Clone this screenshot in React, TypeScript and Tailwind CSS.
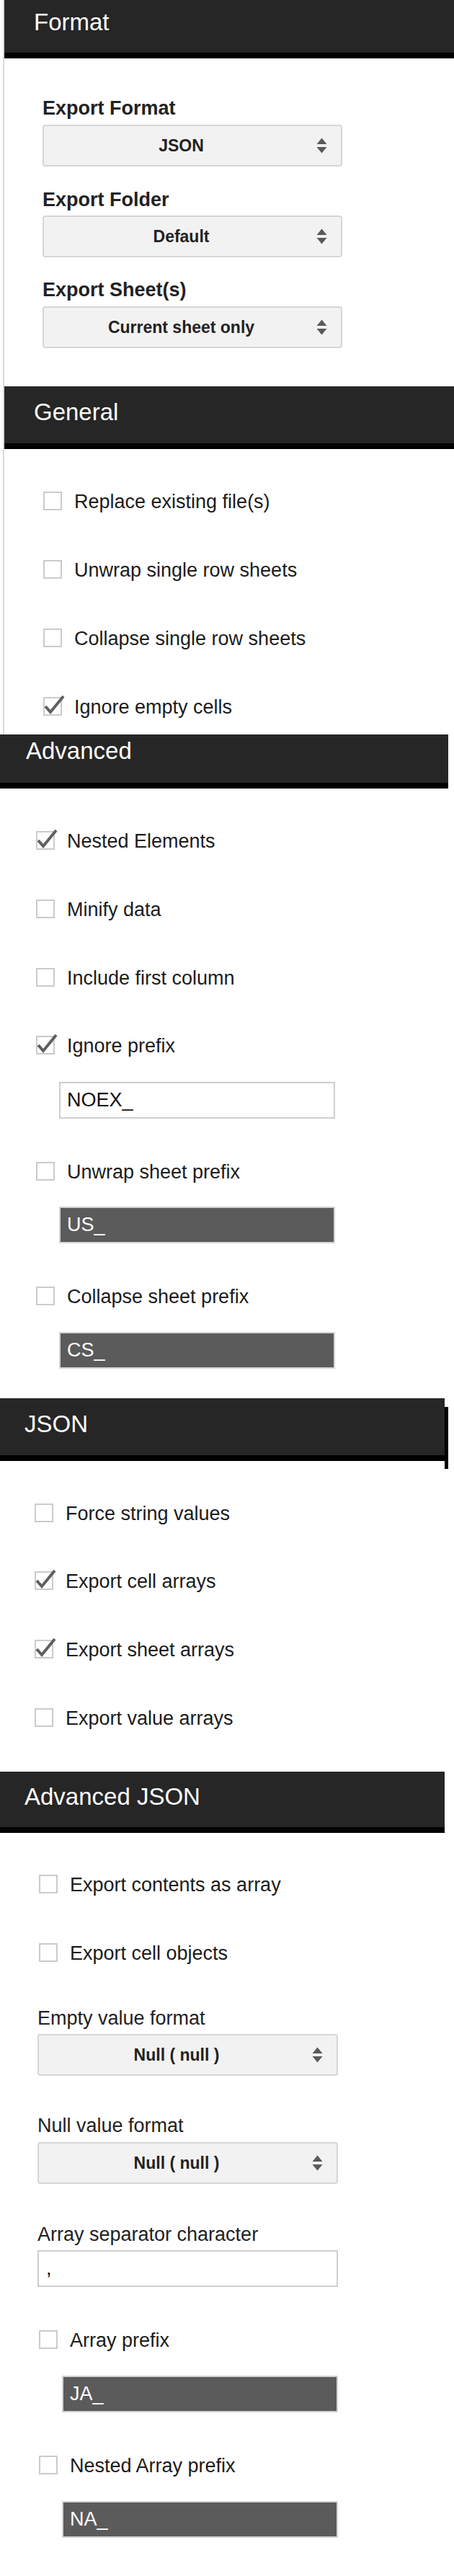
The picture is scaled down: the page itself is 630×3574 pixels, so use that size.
import React from 'react';

type CheckProps = { label: string; checked?: boolean; className?: string };

function Check({ label, checked, className = '' }: CheckProps) {
  return (
    <div className={`flex h-[26px] items-start gap-[17px] ${className}`}>
      <span className="relative h-[26px] w-[26px] shrink-0 border-2 border-[#cbcbcb] bg-white">
        {checked && (
          <svg className="absolute -left-[2px] -top-[6px] overflow-visible" width="32" height="30" viewBox="0 0 32 30">
            <path d="M3 17 L10 25 L28 3" fill="none" stroke="#5f5f5f" strokeWidth="4" />
          </svg>
        )}
      </span>
      <span className="mt-[1px] whitespace-nowrap text-[27px] leading-none text-[#1c1c1c]">{label}</span>
    </div>
  );
}

function Arrows() {
  return (
    <svg width="15" height="22" viewBox="0 0 15 22" className="shrink-0">
      <path d="M0.5 9 L7.5 0.5 L14.5 9 Z" fill="#5a5a5a" />
      <path d="M0.5 13 L14.5 13 L7.5 21.5 Z" fill="#5a5a5a" />
    </svg>
  );
}

function Select({ value, className = '' }: { value: string; className?: string }) {
  return (
    <div className={`flex h-[58px] items-center rounded-[4px] border-2 border-[#d6d6d6] bg-[#f2f2f2] pl-[3px] pr-[19px] ${className}`}>
      <span className="flex-1 text-center text-[23px] font-bold leading-none text-[#222]">{value}</span>
      <Arrows />
    </div>
  );
}

function Input({ value, dark, className = '' }: { value: string; dark?: boolean; className?: string }) {
  return (
    <div
      className={`flex h-[51px] items-center border-2 pl-[9px] text-[27px] leading-none ${
        dark ? 'border-[#d3d3d3] bg-[#5b5b5b] text-white' : 'border-[#cfcfcf] bg-white text-[#111]'
      } ${className}`}
    >
      {value}
    </div>
  );
}

function Header({ title, className, children }: { title: string; className: string; children?: React.ReactNode }) {
  return (
    <div className={`relative border-b-8 border-black bg-[#262626] text-[33px] leading-none text-white ${className}`}>
      {title}
      {children}
    </div>
  );
}

export default function App() {
  return (
    <div className="w-[630px] bg-white font-['Liberation_Sans',Arial,sans-serif] text-[#222]">
      {/* Format + General */}
      <div className="ml-[4px] h-[1019px] overflow-hidden border-l-2 border-[#d9d9d9]">
        <Header title="Format" className="h-[81px] pl-[41px] pt-[14px]" />
        <div className="pl-[53px] pt-[56px]">
          <div className="text-[27px] font-bold leading-none">Export Format</div>
          <Select value="JSON" className="mt-[9px] w-[416px]" />
          <div className="mt-[33px] text-[27px] font-bold leading-none">Export Folder</div>
          <Select value="Default" className="mt-[8px] w-[416px]" />
          <div className="mt-[32px] text-[27px] font-bold leading-none">Export Sheet(s)</div>
          <Select value="Current sheet only" className="mt-[9px] w-[416px]" />
        </div>
        <div className="mt-[53px]">
          <Header title="General" className="h-[87px] pl-[41px] pt-[19px]" />
        </div>
        <div className="flex flex-col gap-[69px] pl-[54px] pt-[59px]">
          <Check label="Replace existing file(s)" />
          <Check label="Unwrap single row sheets" />
          <Check label="Collapse single row sheets" />
          <Check label="Ignore empty cells" checked />
        </div>
      </div>

      {/* Advanced */}
      <div className="h-[921px] w-[622px]">
        <Header title="Advanced" className="h-[75px] pl-[36px] pt-[6px]" />
        <div className="pl-[50px] pt-[59px]">
          <Check label="Nested Elements" checked />
          <Check label="Minify data" className="mt-[69px]" />
          <Check label="Include first column" className="mt-[69px]" />
          <Check label="Ignore prefix" checked className="mt-[68px]" />
          <Input value="NOEX_" className="ml-[32px] mt-[38px] w-[383px]" />
          <Check label="Unwrap sheet prefix" className="mt-[60px]" />
          <Input value="US_" dark className="ml-[32px] mt-[36px] w-[383px]" />
          <Check label="Collapse sheet prefix" className="mt-[60px]" />
          <Input value="CS_" dark className="ml-[32px] mt-[37px] w-[383px]" />
        </div>
      </div>

      {/* JSON */}
      <div className="h-[518px] w-[617px]">
        <Header title="JSON" className="h-[87px] pl-[34px] pt-[19px]">
          <div className="absolute -right-[5px] top-[12px] h-[86px] w-[5px] bg-black" />
        </Header>
        <div className="pl-[48px] pt-[59px]">
          <Check label="Force string values" />
          <Check label="Export cell arrays" checked className="mt-[68px]" />
          <Check label="Export sheet arrays" checked className="mt-[69px]" />
          <Check label="Export value arrays" className="mt-[69px]" />
        </div>
      </div>

      {/* Advanced JSON */}
      <div className="w-[617px] pb-[54px]">
        <Header title="Advanced JSON" className="h-[85px] pl-[34px] pt-[18px]" />
        <div className="pl-[52px] pt-[58px]">
          <Check label="Export contents as array" className="ml-[2px]" />
          <Check label="Export cell objects" className="ml-[2px] mt-[69px]" />
          <div className="mt-[65px] text-[27px] leading-none">Empty value format</div>
          <Select value="Null ( null )" className="mt-[8px] w-[417px]" />
          <div className="mt-[56px] text-[27px] leading-none">Null value format</div>
          <Select value="Null ( null )" className="mt-[9px] w-[417px]" />
          <div className="mt-[57px] text-[27px] leading-none">Array separator character</div>
          <Input value="," className="mt-[8px] w-[417px] pl-[10px]" />
          <Check label="Array prefix" className="ml-[2px] mt-[60px]" />
          <Input value="JA_" dark className="ml-[34px] mt-[37px] w-[383px]" />
          <Check label="Nested Array prefix" className="ml-[2px] mt-[60px]" />
          <Input value="NA_" dark className="ml-[34px] mt-[37px] w-[383px]" />
        </div>
      </div>
    </div>
  );
}
